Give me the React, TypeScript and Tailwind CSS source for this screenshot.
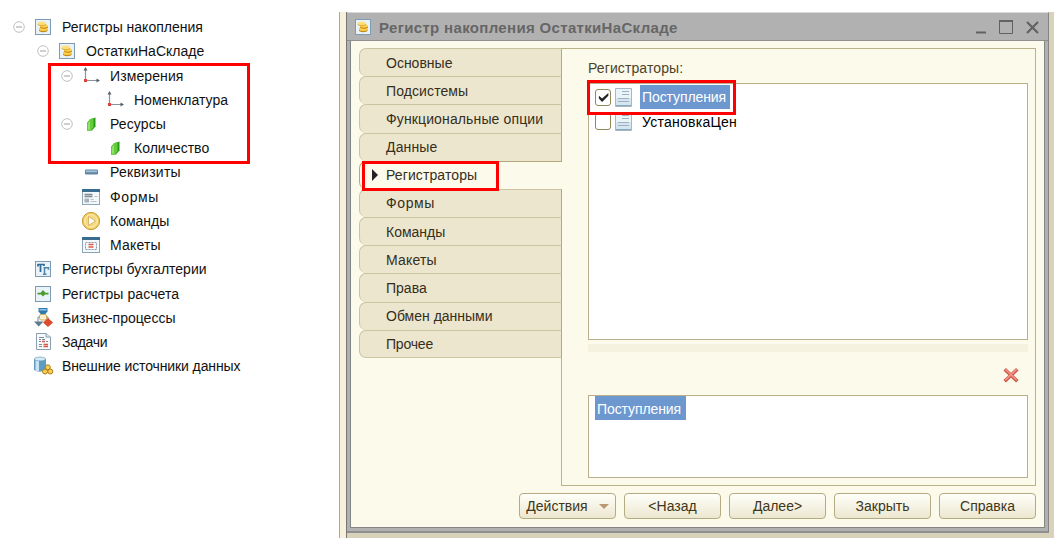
import type { ReactNode } from "react";
import clsx from "clsx";

type IconName =
  | "accumulation"
  | "dimension"
  | "resource"
  | "attribute"
  | "form"
  | "command"
  | "layout"
  | "accounting"
  | "calculation"
  | "process"
  | "task"
  | "source";

type TreeItem = {
  label: string;
  level: 0 | 1 | 2 | 3;
  icon: IconName;
  open?: boolean;
  tracking?: string;
};

const tree: TreeItem[] = [
  { label: "Регистры накопления", level: 0, icon: "accumulation", open: true },
  { label: "ОстаткиНаСкладе", level: 1, icon: "accumulation", open: true },
  { label: "Измерения", level: 2, icon: "dimension", open: true, tracking: "tracking-[0.1px]" },
  { label: "Номенклатура", level: 3, icon: "dimension" },
  { label: "Ресурсы", level: 2, icon: "resource", open: true, tracking: "tracking-[0.1px]" },
  { label: "Количество", level: 3, icon: "resource" },
  { label: "Реквизиты", level: 2, icon: "attribute", tracking: "tracking-[0.25px]" },
  { label: "Формы", level: 2, icon: "form", tracking: "tracking-[0.6px]" },
  { label: "Команды", level: 2, icon: "command" },
  { label: "Макеты", level: 2, icon: "layout", tracking: "tracking-[0.2px]" },
  { label: "Регистры бухгалтерии", level: 0, icon: "accounting" },
  { label: "Регистры расчета", level: 0, icon: "calculation", tracking: "tracking-[0.1px]" },
  { label: "Бизнес-процессы", level: 0, icon: "process" },
  { label: "Задачи", level: 0, icon: "task", tracking: "tracking-[-0.3px]" },
  { label: "Внешние источники данных", level: 0, icon: "source", tracking: "tracking-[-0.11px]" },
];

const indent = ["pl-[13px]", "pl-[37px]", "pl-[61px]", "pl-[85px]"];

type Tab = { label: string; active?: boolean; tracking?: string };

const tabs: Tab[] = [
  { label: "Основные" },
  { label: "Подсистемы", tracking: "tracking-[0.1px]" },
  { label: "Функциональные опции", tracking: "tracking-[0.13px]" },
  { label: "Данные", tracking: "tracking-[0.15px]" },
  { label: "Регистраторы", active: true, tracking: "tracking-[0.1px]" },
  { label: "Формы", tracking: "tracking-[0.6px]" },
  { label: "Команды" },
  { label: "Макеты", tracking: "tracking-[0.2px]" },
  { label: "Права" },
  { label: "Обмен данными" },
  { label: "Прочее", tracking: "tracking-[-0.2px]" },
];

const Frame = ({ children }: { children: ReactNode }) => (
  <>
    <rect x="1.5" y="1.5" width="15" height="15" fill="#e9f2f8" stroke="#7d9cb3" />
    {children}
  </>
);

const icons: Record<IconName, ReactNode> = {
  accumulation: (
    <Frame>
      <path d="M5 11v2q4 2.400 8.500 0v-2z" fill="#c98a12" />
      <ellipse cx="9.200" cy="11" rx="4.300" ry="1.900" fill="#fbd34e" />
      <path d="M6 8.200v1.500q4 2 8 0V8.200z" fill="#c07f10" />
      <ellipse cx="10" cy="8" rx="4" ry="1.700" fill="#fbd34e" />
      <path d="M3.800 5.500v1.600q4 2 8.200 0V5.500z" fill="#d0901a" />
      <ellipse cx="7.900" cy="5.400" rx="4.100" ry="1.800" fill="#fde07a" />
    </Frame>
  ),
  dimension: (
    <>
      <path d="M3.500 2v11.500H16" fill="none" stroke="#8a949c" strokeWidth="1.200" />
      <path d="M1.500 3.500 3.500 0l2 3.500zM14.500 11.500l3.500 2-3.500 2z" fill="#56636e" />
      <rect x="2" y="12" width="3" height="3" fill="#e0403a" />
    </>
  ),
  resource: (
    <>
      <path d="M5 8 8 4.300 13.500 2.500v9L10 15.500H5z" fill="#2b9a1b" />
      <path d="M5 8 8 4.300 11.500 3v9.300L9 15.500H5z" fill="#62cd3c" />
      <path d="M6 8.500 8 5.800v8.700H6z" fill="#93e36b" />
    </>
  ),
  attribute: (
    <>
      <rect x="3" y="6.500" width="13" height="5" rx="1" fill="#5d87a4" />
      <rect x="4" y="7.500" width="11" height="1.700" fill="#a9c5d8" />
    </>
  ),
  form: (
    <>
      <rect x=".5" y="1.500" width="17" height="15" fill="#f5f8fa" stroke="#8aa6b8" />
      <rect y="1" width="18" height="3" fill="#3a6c90" />
      <path d="M2.500 6.500h8M2.500 8.500h8" stroke="#7f8b93" strokeWidth="1.300" />
      <path d="M2.500 10.500h4.500v4H2.500z" fill="#a8b1b7" />
      <path d="M8.500 11.500h3M8.500 13.500h6M12.500 8.500h3" stroke="#b8c1c7" />
    </>
  ),
  command: (
    <>
      <circle cx="9" cy="9" r="8.600" fill="#f5cf5c" stroke="#c39a3a" />
      <circle cx="9" cy="9" r="6.300" fill="#f5d980" stroke="#fff0bd" />
      <path d="M6.500 4.500v9L13.500 9z" fill="#fff" stroke="#cfa955" strokeWidth=".8" />
    </>
  ),
  layout: (
    <>
      <rect x=".5" y="1.500" width="17" height="15" fill="#f5f8fa" stroke="#8aa6b8" />
      <rect y="1" width="18" height="3" fill="#3a6c90" />
      <rect x="3.500" y="6.500" width="11" height="7" fill="none" stroke="#8b9aa4" strokeDasharray="2 1" />
      <path d="M6.500 8.500h5M6.500 11h5" stroke="#dc5a4c" strokeWidth="1.300" />
    </>
  ),
  accounting: (
    <Frame>
      <path d="M3.500 4.500h7M6.500 4.500v7.500M4 4v2.500M10 4v2" stroke="#2f6c96" strokeWidth="1.700" fill="none" />
      <path d="M10.500 7.500v7M9.500 7.700h5v2M9 14.200h3.500" stroke="#4f86aa" strokeWidth="1.500" fill="none" />
    </Frame>
  ),
  calculation: (
    <Frame>
      <path d="M3.500 7.700h3L9 5l2.500 2.700h3v1.700H11L9 11.500 7 9.400H3.500z" fill="#4c9c2e" />
    </Frame>
  ),
  process: (
    <>
      <path d="M4 13V8h10v3" fill="none" stroke="#7c8991" />
      <path d="M4.500-1H13.500v3.500L11 5.500H7L4.500 2.500z" fill="#2f79ad" />
      <rect x="5.500" y="0" width="7" height="1.500" fill="#8fc4e6" />
      <rect x="5.500" y="5.500" width="7" height="5.500" rx="1.500" fill="#fbf1d1" stroke="#cfae62" />
      <path d="M0 12.500h9.500L4.700 17.500z" fill="#5c7c90" />
      <path d="m14 9 5 4.500-5 4.500-5-4.500z" fill="#df4a2b" />
    </>
  ),
  task: (
    <>
      <path d="M2.500.500H12l4.500 3.500v12.500h-14z" fill="#f7f9fb" stroke="#8aa0b0" />
      <path d="M12 .500V4h4.500" fill="#dce7ee" stroke="#8aa0b0" />
      <path d="M5 4.500h5M5 6.500h2M8 6.500h3M5 8.500h2M5 11.500h3M5 13.500h3M12 8.500h2" stroke="#7d8b95" />
      <path d="M8 8.500h3M9.500 11.500H14M9.500 13.500H14" stroke="#d9574b" strokeWidth="1.300" />
    </>
  ),
  source: (
    <>
      <path d="M0 2v11q5 3.500 12 0V2z" fill="#5f9cc4" />
      <path d="M1.500 3v10.700l3.500.8V3z" fill="#c9e3f2" />
      <ellipse cx="6" cy="2" rx="5.700" ry="1.900" fill="#d7ebf6" stroke="#6d9dbb" strokeWidth=".7" />
      <g fill="#f8ce55" stroke="#b07a18">
        <circle cx="13.800" cy="10.300" r="2.500" />
        <circle cx="11" cy="14.500" r="2.500" />
        <circle cx="16.300" cy="14.500" r="2.500" />
      </g>
    </>
  ),
};

const Icon = ({ name, className }: { name: IconName; className?: string }) => (
  <svg viewBox="0 0 18 18" className={clsx("size-[18px] shrink-0 overflow-visible", className)}>
    {icons[name]}
  </svg>
);

const Expander = () => (
  <svg viewBox="0 0 12 12" className="size-3">
    <circle cx="6" cy="6" r="5.300" fill="#fff" stroke="#b0b0b0" strokeWidth=".8" />
    <path d="M3 6h6" stroke="#888" strokeWidth=".8" />
  </svg>
);

const TreeRow = ({ item }: { item: TreeItem }) => (
  <div className={clsx("flex h-[24.23px] items-center", indent[item.level])}>
    <span className="w-3 shrink-0">{item.open && <Expander />}</span>
    <Icon name={item.icon} className="ml-[9px]" />
    <span className={clsx("ml-[10px]", item.tracking)}>{item.label}</span>
  </div>
);

const DocIcon = () => (
  <svg viewBox="0 0 17 19" className="h-[19px] w-[17px]">
    <path d="M.5.5h16v18H.5z" fill="#eaf3f8" stroke="#a3b9c8" />
    <path d="M1 10h15v8H1z" fill="#d5e4ee" />
    <path d="M7 3.500h7M7 6.500h7M3 10.500h11M3 13.500h11" stroke="#9bb2c3" />
    <path d="M1 17.500h15" stroke="#8ba7bb" />
  </svg>
);

const CheckRow = ({ label, checked }: { label: string; checked?: boolean }) => (
  <div className="flex h-[24.5px] items-center pl-[6px]">
    <span className="flex h-[17px] w-4 items-center justify-center rounded-[3px] border border-[#91865c] bg-white">
      {checked && (
        <svg viewBox="0 0 10 10" className="size-[11px]">
          <path d="M.8 3.500v2.300L3.700 9l5.700-5.500V1L3.700 6z" fill="#222" />
        </svg>
      )}
    </span>
    <span className="ml-1">
      <DocIcon />
    </span>
    <span
      className={clsx(
        "ml-[8px] flex h-[24px] w-[90px] items-center pl-[2px] whitespace-nowrap",
        checked ? "bg-[#6d97cf] tracking-[-0.1px] text-white" : "tracking-[0.25px] text-black",
      )}
    >
      {label}
    </span>
  </div>
);

const TabItem = ({ tab }: { tab: Tab }) => (
  <div
    className={clsx(
      "flex h-[28.18px] items-center rounded-l-[7px] border-t border-l pl-[26px] last:border-b",
      tab.active
        ? "border-[#b3a97e] bg-[#fcfaea]"
        : "border-r border-[#cbc4a3] border-r-[#b3a97e] bg-[#ece6ce]",
      tab.tracking,
    )}
  >
    {tab.label}
  </div>
);

const DialogButton = ({ children, className }: { children: ReactNode; className?: string }) => (
  <button
    className={clsx(
      "flex h-[26px] w-[97px] items-center justify-center rounded-[4px] border border-[#b5ab82] bg-gradient-to-b from-[#fffffa] to-[#ece7d0] text-[#40361a]",
      className,
    )}
  >
    {children}
  </button>
);

const TitleBar = () => (
  <div className="flex h-7 items-center border-b border-[#8f8f8f] bg-[#b1b1b1] pl-[7px]">
    <Icon name="accumulation" />
    <span className="ml-[7px] pt-px text-[15px] font-bold tracking-[0.33px] text-[#666]">
      Регистр накопления ОстаткиНаСкладе
    </span>
    <svg viewBox="0 0 64 16" className="mr-[8px] ml-auto h-4 w-16" fill="none" stroke="#626262">
      <path d="M0 13.500h10" strokeWidth="2" />
      <path d="M23 2h14" strokeWidth="2" />
      <path d="M23.500 2v12.500h13V2" />
      <path d="m51 3 11 11M62 3 51 14" strokeWidth="2.200" />
    </svg>
  </div>
);

const RegisterWindow = () => (
  <div className="mt-3 flex h-[526px] w-[715px] border-l border-[#b5a97c] bg-[#f7f1dc]">
    <div className="ml-[6px] flex w-[708px] flex-col border-l border-[#777] bg-[#d8d2bb] pr-[5px] pb-[5px]">
      <div className="flex grow flex-col border-t border-r border-b-2 border-t-[#d8d8d8] border-r-[#858585] border-b-[#8f8f8f] bg-[#b1b1b1]">
        <TitleBar />
        <div className="mr-[3px] mb-[3px] ml-[3px] flex grow flex-col border-r border-b border-l border-[#858585] bg-[#fcfaea] px-[8px] pt-[7px]">
          <div className="flex h-[438px]">
            <div className="z-10 w-[203px] shrink-0 text-[#352e1c]">
              {tabs.map((tab) => (
                <TabItem key={tab.label} tab={tab} />
              ))}
            </div>
            <div className="-ml-px flex grow flex-col border border-[#bbb28a] pr-[7px] pl-[26px]">
              <div className="flex h-[34px] items-center pt-[4px] tracking-[0.1px] text-[#4b4327]">Регистраторы:</div>
              <div className="h-[257px] border border-[#b9b08b] bg-white pt-px">
                <CheckRow label="Поступления" checked />
                <CheckRow label="УстановкаЦен" />
              </div>
              <div className="mt-1 h-2 bg-[#f5f2df]" />
              <div className="flex h-[43px] items-center justify-end pr-[9px]">
                <svg viewBox="0 0 16 16" className="mt-0.5 size-4" strokeLinecap="square">
                  <path d="m3 3.500 10 9.500M13 3.500 3 13" stroke="#d0564a" strokeWidth="3.600" />
                  <path d="m3 3 10 9.500M13 3 3 12.500" stroke="#f29484" strokeWidth="1.600" />
                </svg>
              </div>
              <div className="h-[83px] border border-[#b9b08b] bg-white pl-[6px]">
                <span className="flex h-6 w-[91px] items-center bg-[#6d97cf] pt-px pl-[2px] tracking-[-0.1px] text-white">
                  Поступления
                </span>
              </div>
            </div>
          </div>
          <div className="mt-[7px] flex justify-end gap-[8px]">
            <DialogButton className="gap-[11px]">
              Действия
              <svg viewBox="0 0 10 5" className="h-[5px] w-[10px]">
                <path d="M0 0h10L5 5z" fill="#b99873" />
              </svg>
            </DialogButton>
            <DialogButton>&lt;Назад</DialogButton>
            <DialogButton>Далее&gt;</DialogButton>
            <DialogButton>Закрыть</DialogButton>
            <DialogButton>Справка</DialogButton>
          </div>
        </div>
      </div>
    </div>
  </div>
);

const App = () => {
  return (
    <div className="relative flex h-[545px] w-[1060px] overflow-hidden bg-white font-['Liberation_Sans',sans-serif] text-[14px] leading-none text-[#111]">
      <div className="w-[339px] shrink-0 pt-[15px] whitespace-nowrap">
        {tree.map((item) => (
          <TreeRow key={item.label} item={item} />
        ))}
      </div>
      <RegisterWindow />

      {/* Highlight frames and the active tab marker */}
      <svg viewBox="0 0 6 12" className="absolute top-[169px] left-[372px] z-20 h-3 w-[6px]">
        <path d="M0 0v12l6-6z" fill="#222" />
      </svg>
      <div className="absolute top-[63px] left-[48px] z-20 h-[101px] w-[202px] border-3 border-[#fe0000]" />
      <div className="absolute top-[161px] left-[362px] z-20 h-[30px] w-[137px] border-3 border-[#fe0000]" />
      <div className="absolute top-[80px] left-[587px] z-20 h-[35px] w-[149px] border-3 border-[#fe0000]" />
    </div>
  );
};

export default App;
